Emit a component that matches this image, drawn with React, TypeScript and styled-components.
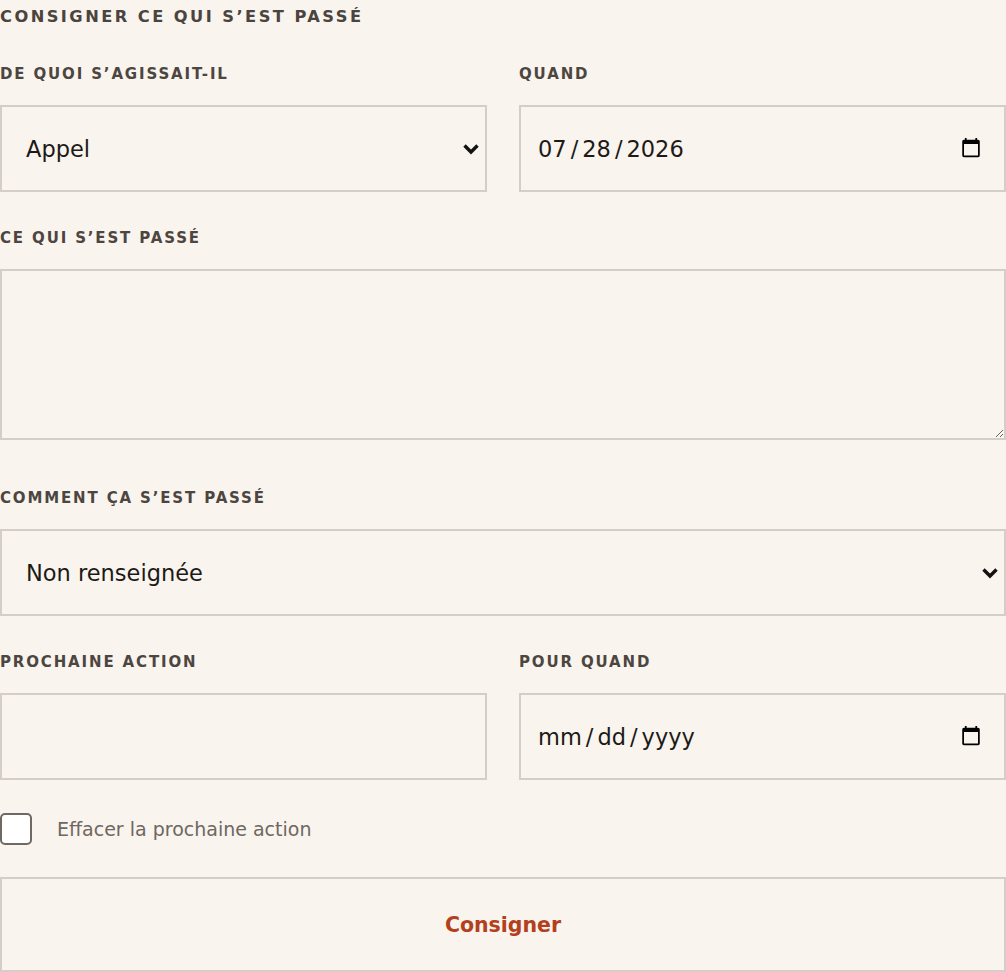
import React from "react";
import styled, { createGlobalStyle, css } from "styled-components";

const Global = createGlobalStyle`
  html, body { margin: 0; padding: 0; background: #f9f4ee; }
  body { font-family: "DejaVu Sans", sans-serif; }
  *, *::before, *::after { box-sizing: border-box; }
`;

const Form = styled.form`
  width: 1006px;
  display: flex;
  flex-direction: column;
`;

const Title = styled.h2`
  margin: 7px 0 38px;
  font-size: 16.25px;
  line-height: 20px;
  font-weight: 700;
  letter-spacing: 2.45px;
  text-transform: uppercase;
  color: #4b433d;
`;

const Fields = styled.div`
  display: flex;
  flex-direction: column;
  gap: 37px;
`;

const Row = styled.div`
  display: grid;
  grid-template-columns: 1fr 1fr;
  gap: 32px;
`;

const Field = styled.div`
  display: flex;
  flex-direction: column;
  min-width: 0;
`;

const Label = styled.label`
  display: block;
  margin-bottom: 22px;
  font-size: 15px;
  line-height: 18px;
  font-weight: 700;
  letter-spacing: 1.85px;
  text-transform: uppercase;
  color: #4d4540;
`;

const control = css`
  width: 100%;
  margin: 0;
  border: 2px solid #d6cdc7;
  border-radius: 0;
  background: transparent;
  font-family: "DejaVu Sans", sans-serif;
  font-size: 22.5px;
  color: #1d1a17;
  outline: none;
`;

const Input = styled.input`
  ${control};
  height: 87px;
  padding: 0 20px 0 16px;

  &::-webkit-datetime-edit-text {
    padding: 0 3px;
  }
  &::-webkit-calendar-picker-indicator {
    margin: 0;
  }
`;

const SelectWrap = styled.div`
  position: relative;
`;

const Select = styled.select`
  ${control};
  display: block;
  height: 87px;
  padding: 0 40px 0 24px;
  appearance: none;
  -webkit-appearance: none;
`;

const Chevron = styled.svg`
  position: absolute;
  right: 7px;
  top: 50%;
  width: 18px;
  height: 12px;
  margin-top: -6px;
  pointer-events: none;
`;

const TextArea = styled.textarea`
  ${control};
  display: block;
  height: 171px;
  margin-bottom: 12px;
  padding: 16px;
  resize: both;
`;

const Footer = styled.div`
  display: flex;
  flex-direction: column;
  gap: 32px;
  margin-top: 33px;
`;

const CheckRow = styled.label`
  display: flex;
  align-items: center;
  gap: 25px;
  font-size: 19px;
  line-height: 32px;
  color: #6f6761;
`;

const Checkbox = styled.input`
  appearance: none;
  -webkit-appearance: none;
  width: 32px;
  height: 32px;
  margin: 0;
  flex: none;
  border: 2px solid #6e6964;
  border-radius: 5px;
  background: #ffffff;
`;

const Submit = styled.button`
  width: 100%;
  height: 95px;
  margin: 0;
  border: 2px solid #d6cdc7;
  background: transparent;
  font-family: "DejaVu Sans", sans-serif;
  font-size: 20.5px;
  font-weight: 700;
  color: #b43f1d;
  cursor: pointer;
`;

function ChevronIcon() {
  return (
    <Chevron viewBox="0 0 18 12" aria-hidden="true">
      <path
        d="M2.5 2.5 L9 9 L15.5 2.5"
        fill="none"
        stroke="#141210"
        strokeWidth="3.4"
        strokeLinejoin="miter"
      />
    </Chevron>
  );
}

type Opt = { value: string; label: string };

function SelectBox({ id, options, value }: { id: string; options: Opt[]; value: string }) {
  return (
    <SelectWrap>
      <Select id={id} defaultValue={value}>
        {options.map((o) => (
          <option key={o.value} value={o.value}>
            {o.label}
          </option>
        ))}
      </Select>
      <ChevronIcon />
    </SelectWrap>
  );
}

export default function App() {
  return (
    <>
      <Global />
      <Form onSubmit={(e) => e.preventDefault()}>
        <Title>Consigner ce qui s’est passé</Title>
        <Fields>
          <Row>
            <Field>
              <Label htmlFor="kind">De quoi s’agissait-il</Label>
              <SelectBox
                id="kind"
                value="appel"
                options={[
                  { value: "appel", label: "Appel" },
                  { value: "email", label: "Email" },
                  { value: "rdv", label: "Rendez-vous" },
                ]}
              />
            </Field>
            <Field>
              <Label htmlFor="when">Quand</Label>
              <Input id="when" type="date" defaultValue="2026-07-28" />
            </Field>
          </Row>
          <Field>
            <Label htmlFor="what">Ce qui s’est passé</Label>
            <TextArea id="what" />
          </Field>
          <Field>
            <Label htmlFor="how">Comment ça s’est passé</Label>
            <SelectBox
              id="how"
              value="none"
              options={[
                { value: "none", label: "Non renseignée" },
                { value: "good", label: "Bien" },
                { value: "bad", label: "Mal" },
              ]}
            />
          </Field>
          <Row>
            <Field>
              <Label htmlFor="next">Prochaine action</Label>
              <Input id="next" type="text" />
            </Field>
            <Field>
              <Label htmlFor="due">Pour quand</Label>
              <Input id="due" type="date" />
            </Field>
          </Row>
        </Fields>
        <Footer>
          <CheckRow>
            <Checkbox type="checkbox" />
            Effacer la prochaine action
          </CheckRow>
          <Submit type="submit">Consigner</Submit>
        </Footer>
      </Form>
    </>
  );
}
